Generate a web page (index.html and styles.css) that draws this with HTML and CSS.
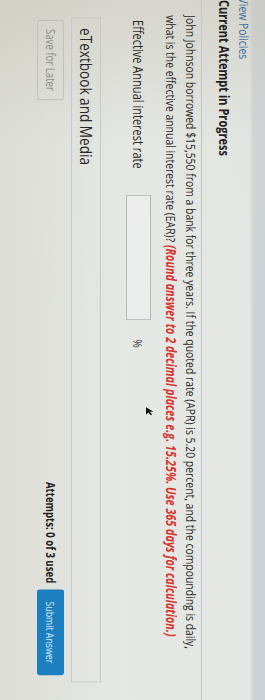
FILE: index.html
```html
<!DOCTYPE html>
<html lang="en">
<head>
<meta charset="utf-8">
<title>Current Attempt in Progress</title>
<link rel="stylesheet" href="styles.css">
</head>
<body>
<div class="screen">
  <div class="page">
    <a class="policies" href="#">View Policies</a>
    <h2 class="attempt-title">Current Attempt in Progress</h2>
    <div class="question">
      <p class="qtext"><span class="qline">John Johnson borrowed $15,550 from a bank for three years. If the quoted rate (APR) is 5.20 percent, and the compounding is daily,</span><br><span class="qline">what is the effective annual interest rate (EAR)? <em class="hint">(Round answer to 2 decimal places e.g. 15.25%. Use 365 days for calculation.)</em></span></p>
      <div class="answer-row">
        <label class="answer-label">Effective Annual interest rate</label>
        <span class="answer-input"></span>
        <span class="pct">%</span>
      </div>
    </div>
    <div class="media">eTextbook and Media</div>
    <div class="actions">
      <button class="btn-save">Save for Later</button>
      <span class="attempts">Attempts: 0 of 3 used</span>
      <button class="btn-submit">Submit Answer</button>
    </div>
    <svg class="cursor" viewBox="0 0 12 12" width="12" height="12"><path d="M1 1 L1 10 L3.5 7.5 L5.5 11 L7 10.2 L5 6.8 L8.5 6.8 Z" fill="#111"/></svg>
  </div>
</div>
</body>
</html>
```

FILE: styles.css
```css
html, body {
  margin: 0;
  padding: 0;
}
body {
  width: 265px;
  height: 700px;
  overflow: hidden;
  background: #e2e4e1;
  font-family: "Open Sans", "Liberation Sans", sans-serif;
  color: #2a2a2a;
}
.screen {
  width: 265px;
  height: 700px;
  overflow: hidden;
}
.page {
  position: relative;
  width: 875px;
  height: 265px;
  box-sizing: border-box;
  padding-top: 13px;
  transform-origin: 0 0;
  transform: translate(265px, 0) rotate(90deg) scale(0.8, 1);
  background:
    linear-gradient(to right, rgba(200, 198, 186, 0.55) 0, rgba(220, 222, 214, 0.15) 180px, rgba(226, 228, 225, 0) 400px),
    linear-gradient(to bottom, #cdd2d6 0, #cfd3d6 12px, #e4e6e3 15px, #e6e8e5 55%, #dcddd5 100%);
}
.policies {
  display: block;
  margin-left: -3px;
  font-size: 13px;
  line-height: 17px;
  color: #3d6c9f;
  text-decoration: none;
}
.attempt-title {
  margin: 2px 0 0;
  font-size: 13.8px;
  font-weight: 700;
  line-height: 18px;
  color: #1f1f1f;
}
.question {
  margin-top: 13px;
  border-top: 1px solid #c3c6c7;
  padding-left: 19px;
}
.qtext {
  margin: 0;
  font-size: 13px;
  line-height: 20px;
  white-space: nowrap;
  color: #2b2b2b;
}
.hint {
  color: #d8342c;
  font-weight: 700;
  font-style: italic;
  font-size: 13.5px;
}
.answer-row {
  display: flex;
  align-items: center;
  margin-top: 10px;
  height: 25px;
}
.answer-label {
  flex: 0 0 225px;
  padding-left: 6px;
  box-sizing: border-box;
  font-size: 13.8px;
  color: #2b2b2b;
}
.answer-input {
  flex: 0 0 auto;
  width: 156px;
  height: 25px;
  box-sizing: border-box;
  border: 1px solid #b4b8b9;
  background: rgba(240, 242, 241, 0.6);
}
.pct {
  margin-left: 24px;
  font-size: 13px;
  color: #444;
}
.media {
  margin: 25px 0 0 22px;
  width: 831px;
  height: 30px;
  box-sizing: border-box;
  border: 1px solid #c6c9c9;
  padding-left: 12px;
  font-size: 17px;
  line-height: 28px;
  color: #2a2a2a;
}
.actions {
  display: flex;
  align-items: center;
  margin-top: 7px;
  height: 27px;
  padding: 0 31px 0 25px;
}
.btn-save {
  width: 100px;
  height: 27px;
  border: 1px solid #bcbebe;
  border-radius: 3px;
  background: transparent;
  font-family: "Open Sans", "Liberation Sans", sans-serif;
  font-size: 12px;
  color: #8a8c8c;
  padding: 0;
}
.attempts {
  margin-left: auto;
  font-size: 12px;
  font-weight: 700;
  color: #222;
}
.btn-submit {
  margin-left: 8px;
  width: 107px;
  height: 27px;
  border: none;
  border-radius: 3px;
  background: #1d7fc0;
  font-family: "Open Sans", "Liberation Sans", sans-serif;
  font-size: 11px;
  color: #d3e9f6;
  padding: 0;
}
.cursor {
  position: absolute;
  left: 508px;
  top: 108px;
  transform: rotate(-90deg);
}
```
